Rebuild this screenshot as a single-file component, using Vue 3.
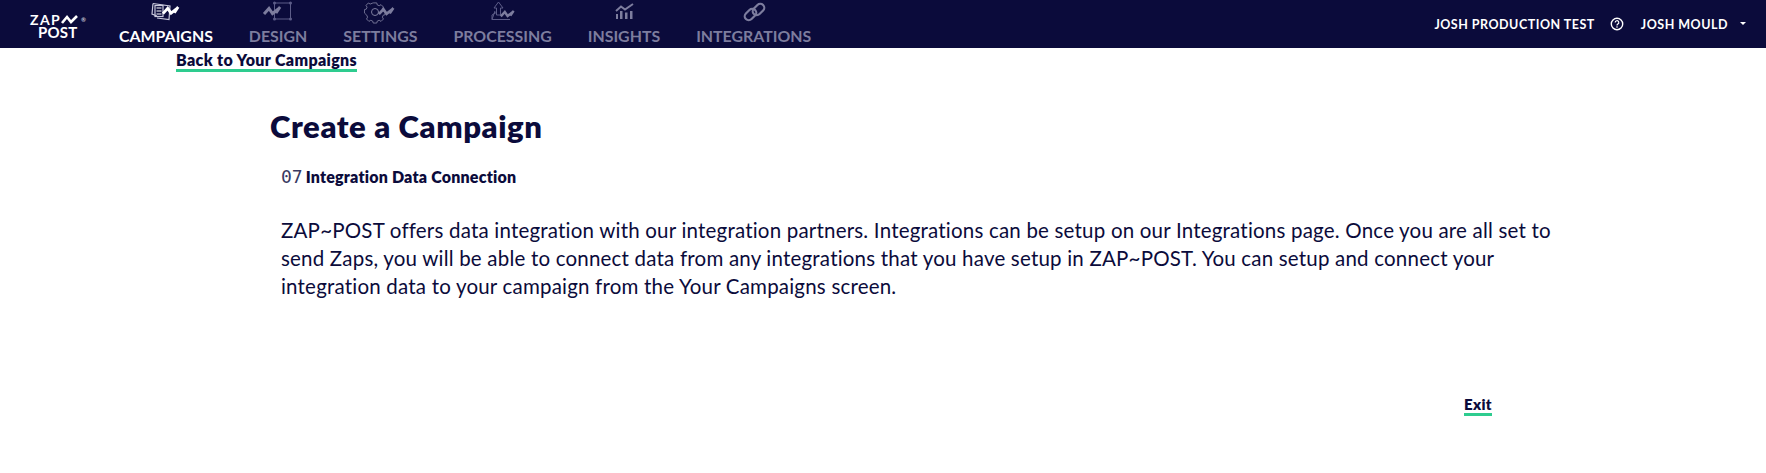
<template>
  <div class="page">
    <header class="topbar">
      <div class="logo">
        <div class="logo-row">ZAP<svg class="logo-zap" viewBox="0 0 18 11" width="18" height="11"><path d="M1 9 L6 3 L10 8 L16 2" fill="none" stroke="#fff" stroke-width="2.6" stroke-linejoin="miter"/></svg><span class="reg">®</span></div>
        <div class="logo-post">POST</div>
      </div>
      <nav class="nav">
        <a v-for="item in items" :key="item.label" class="nav-item" :class="{ active: item.active }">
          <svg class="nav-icon" viewBox="0 0 32 24" width="32" height="24" v-html="item.icon"></svg>
          <span class="nav-label">{{ item.label }}</span>
        </a>
      </nav>
      <div class="account">
        <span>JOSH PRODUCTION TEST</span>
        <svg class="help" viewBox="0 0 14 14" width="14" height="14"><circle cx="7" cy="7" r="5.7" fill="none" stroke="#fff" stroke-width="1.4"/><path d="M5.2 5.6a1.8 1.8 0 1 1 2.7 1.5c-.6.4-.9.7-.9 1.3" fill="none" stroke="#fff" stroke-width="1.2"/><circle cx="7" cy="10" r=".8" fill="#fff"/></svg>
        <span class="user">JOSH MOULD</span>
        <span class="caret"></span>
      </div>
    </header>
    <div class="back-row"><a class="link">Back to Your Campaigns</a></div>
    <main class="content">
      <h1 class="title">Create a Campaign</h1>
      <div class="body">
        <div class="step"><span class="num">07</span> <span class="step-name">Integration Data Connection</span></div>
        <p class="copy">ZAP~POST offers data integration with our integration partners. Integrations can be setup on our Integrations page. Once you are all set to send Zaps, you will be able to connect data from any integrations that you have setup in ZAP~POST. You can setup and connect your integration data to your campaign from the Your Campaigns screen.</p>
      </div>
      <div class="exit-row"><a class="link exit">Exit</a></div>
    </main>
  </div>
</template>

<script setup>
const zap = (x, y, c, s = 1) => `<path transform="translate(${x} ${y}) scale(${s})" d="M1 8 L6 2.500 L9.500 7.500 L14 4 L13 7 L17 1" fill="none" stroke="${c}" stroke-width="3"/>`
const g = '#7d7d9e'
const d = '#5d5d88'
const items = [
  {
    label: 'CAMPAIGNS', active: true,
    icon: `<g fill="none" stroke="#c9c9dc" stroke-width="1.200"><path d="M3 3.500 L20 6 L19 19.500 L7 18 M3 3.500 L2 14 L7 16"/><rect x="5" y="5.500" width="8" height="11"/></g><path d="M6.500 8h5M6.500 11h5M6.500 14h5" stroke="#fff" stroke-width="1.200"/>` + zap(12, 6, '#fff', .95),
  },
  {
    label: 'DESIGN',
    icon: `<rect x="12.500" y="3" width="16" height="16" fill="none" stroke="${d}" stroke-width="1"/><g fill="${d}"><circle cx="12.500" cy="3" r="1.500"/><circle cx="28.500" cy="3" r="1.500"/><circle cx="12.500" cy="19" r="1.500"/><circle cx="28.500" cy="19" r="1.500"/></g>` + zap(1, 6, g),
  },
  {
    label: 'SETTINGS',
    icon: `<g fill="none" stroke="${g}" stroke-width="1"><circle cx="11" cy="12" r="3.500"/><path d="M9 2.500h4l.6 2.300 2.200.9 2.100-1.200 2.700 2.700-1.200 2.100.9 2.200 2.200.6v3.800l-2.200.6-.9 2.200 1.200 2.100-2.700 2.700-2.100-1.200-2.200.9-.6 2.200H9l-.6-2.200-2.200-.9-2.100 1.200-2.700-2.700 1.200-2.100-.9-2.200L-1 14v-3.800l2.100-.6.900-2.200-1.200-2.100 2.700-2.700 2.100 1.200 2.200-.9z" transform="translate(1.300 .7) scale(.88)"/></g>` + zap(14, 7, g, .9),
  },
  {
    label: 'PROCESSING',
    icon: `<g fill="none" stroke="${d}" stroke-width="1"><path d="M8 11 L5 19.500 H23 M5 19.500 L5 15 L10 12"/><path d="M11.500 2 L7 8 H9.500 V15 H13.500 V8 H16z"/></g>` + zap(13, 10, g, .8),
  },
  {
    label: 'INSIGHTS',
    icon: `<g fill="${g}"><rect x="8" y="14" width="2" height="5"/><rect x="12" y="11" width="2.500" height="8"/><rect x="17" y="12.500" width="2.500" height="6.500"/><rect x="22" y="11" width="2.500" height="8"/></g><path d="M8 11 L13 6.500 L17 9.500 L25 4" fill="none" stroke="${g}" stroke-width="2"/>`,
  },
  {
    label: 'INTEGRATIONS',
    icon: `<g fill="none" stroke="${g}" stroke-width="2.200"><rect x="6" y="10.500" width="13" height="8" rx="4" transform="rotate(-45 12.500 14.500)"/><rect x="14" y="5.500" width="13" height="8" rx="4" transform="rotate(-45 20.500 9.500)"/></g>`,
  },
]
</script>

<style>
html, body { margin: 0; background: #fff; }
</style>

<style scoped>
.page {
  min-height: 473px;
  color: #0b0b3b;
  font-family: "Lato", "Liberation Sans", sans-serif;
}
.topbar {
  height: 48px;
  background: #0b0b3b;
  display: flex;
  align-items: flex-start;
  color: #fff;
}
.logo {
  width: 119px;
  flex: none;
  padding: 13px 0 0 30px;
  box-sizing: border-box;
  font-weight: 700;
  font-size: 14px;
  line-height: 13px;
}
.logo-row { display: flex; align-items: center; letter-spacing: 1.400px; }
.reg { font-size: 6px; margin-left: 2px; color: #c9c9d6; letter-spacing: 0; }
.logo-post { margin-left: 8px; font-size: 15px; letter-spacing: .2px; }
.nav { display: flex; gap: 36px; }
.nav-item {
  display: flex;
  flex-direction: column;
  align-items: center;
  color: #7d7d9e;
}
.nav-item.active { color: #fff; }
.nav-icon { display: block; height: 24px; }
.nav-label {
  font-size: 15.900px;
  font-weight: 700;
  line-height: 24px;
}
.account {
  margin-left: auto;
  display: flex;
  align-items: center;
  height: 48px;
  padding-right: 20px;
  font-size: 12.500px;
  font-weight: 700;
  letter-spacing: .5px;
}
.help { margin-left: 15px; }
.user { margin-left: 17px; }
.caret {
  margin-left: 12px;
  margin-bottom: 2px;
  border-top: 3px solid #fff;
  border-left: 3px solid transparent;
  border-right: 3px solid transparent;
}
.back-row { padding: 2px 0 0 176px; line-height: 20px; height: 24px; }
.link {
  color: #0b0b3b;
  font-weight: 800;
  font-size: 16px;
  letter-spacing: .35px;
  border-bottom: 3px solid #2ecc8f;
}
.link.exit { font-size: 15px; }
.content { padding: 0 0 0 270px; }
.title {
  margin: 34px 0 0;
  font-size: 31px;
  line-height: 36px;
  font-weight: 800;
  letter-spacing: .6px;
}
.body { padding-left: 11px; width: 1290px; }
.step { margin-top: 21px; line-height: 24px; display: flex; align-items: center; gap: 3px; }
.num { font-family: "DejaVu Sans Mono", monospace; font-size: 18px; color: #3a3a62; }
.step-name { font-size: 16px; font-weight: 800; letter-spacing: .2px; }
.copy {
  margin: 27px 0 0;
  font-size: 20.500px;
  line-height: 28px;
  letter-spacing: .2px;
}
.exit-row { padding: 0 0 0 1194px; margin-top: 94px; line-height: 20px; }
</style>
